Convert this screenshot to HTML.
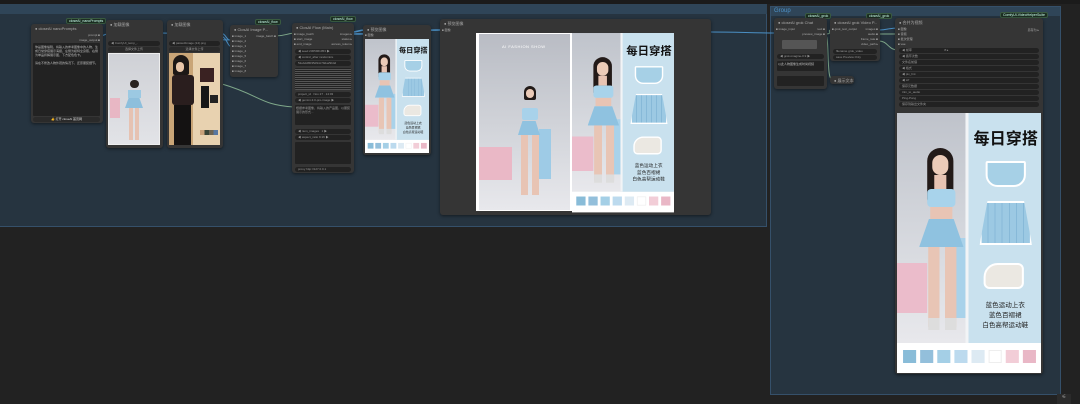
<!DOCTYPE html>
<html><head><meta charset="utf-8"><style>
*{box-sizing:border-box;margin:0;padding:0}
body{width:1080px;height:404px;overflow:hidden;background:#222;font-family:"Liberation Sans","Noto Sans CJK SC",sans-serif;position:relative;color:#ccc}
.a{position:absolute}
.node{position:absolute;background:#353535;border-radius:3px;box-shadow:0 1px 3px rgba(0,0,0,.5)}
.tt{position:absolute;left:4px;top:2px;font-size:4px;color:#aaa;white-space:nowrap}
.w{position:absolute;height:5px;background:#222;border-radius:3px;font-size:3px;color:#999;line-height:5px;padding:0 3px;white-space:nowrap;overflow:hidden}
.badge{position:absolute;height:6px;background:#1c2e22;border:1px solid #395a40;border-radius:2px;font-size:3.5px;color:#cfe;line-height:4px;padding:0 2px;white-space:nowrap}
.ta{position:absolute;background:#222;border-radius:1px}
.poster{position:absolute;left:0;top:0;width:143px;height:260px;background:#fff;transform-origin:0 0;overflow:hidden}
.ph{position:absolute;left:0;top:0;width:143px;height:230px;background:linear-gradient(180deg,#bfc3cb,#dcdee3 70%,#e8e8ec)}
.rp{position:absolute;left:68px;top:0;width:75px;height:230px;background:#c9e1ee;border-left:3px solid #f2f4f6}
.sw{position:absolute;top:237px;width:13px;height:13px}
</style></head><body>
<!-- top bar -->
<div class="a" style="left:0;top:0;width:1080px;height:4px;background:#1b1b1b"></div>
<!-- left group -->
<div class="a" style="left:0;top:4px;width:767px;height:223px;background:#263440;border-bottom:1px solid #35506a;border-right:1px solid #35506a"></div>
<div class="a" style="left:0;top:4px;width:767px;height:10px;background:#2f4558"></div>
<!-- right group -->
<div class="a" style="left:770px;top:6px;width:291px;height:389px;background:#263440;border:1px solid #35506a"></div>
<div class="a" style="left:771px;top:7px;width:289px;height:9px;background:#2f4558;font-size:6px;color:#4e93c9;padding-left:3px;line-height:9px">Group</div>

<svg class="a" style="left:0;top:0" width="1080" height="404">
<g fill="none" stroke-width="1">
<path d="M100 36 C104 36,104 34,108 34" stroke="#4a8fc4"/>
<path d="M160 33 C196 33,200 40,230 40" stroke="#4a8fc4"/>
<path d="M220 33 C226 33,226 40,230 40" stroke="#4a8fc4"/>
<path d="M220 36 C226 36,228 46,230 46" stroke="#4a8fc4"/>
<path d="M162 54 C200 60,200 20,160 54" stroke="none"/>
<path d="M162 52 C190 60,200 80,170 55" stroke="none"/>
<path d="M222 84 C260 95,260 105,294 107" stroke="#7fa88a"/>
<path d="M275 36 C285 36,285 34,294 33" stroke="#7fa88a"/>
<path d="M352 32 C358 32,358 30,366 30" stroke="#4a8fc4" stroke-width="1.5"/>
<path d="M352 34 C400 34,400 30,440 30" stroke="#4a8fc4" stroke-width="1.5"/>
<path d="M710 32 C740 32,750 33,776 33" stroke="#4a8fc4"/>
<path d="M825 34 C835 34,825 30,832 30" stroke="#7fa88a"/>
<path d="M825 34 C830 34,826 80,832 79" stroke="#7fa88a"/>
<path d="M879 30 C888 30,888 28,898 28" stroke="#4a8fc4"/>
<path d="M879 34 C888 34,888 34,898 34" stroke="#7fa88a"/>
<path d="M879 41 C888 41,888 50,898 50" stroke="#7fa88a"/>
</g></svg>

<!-- node1 -->
<div class="badge" style="left:66px;top:18px">closeAI_nanoPrompts</div>
<div class="node" style="left:31px;top:24px;width:72px;height:99px">
<div class="tt">● closeAI nanoPrompts</div>
<div class="a" style="right:3px;top:9px;font-size:3px;color:#aaa;text-align:right;line-height:5px">prompt ■<br>image_output ■</div>
<div class="ta" style="left:2px;top:19px;width:67px;height:73px;padding:2px;font-size:3px;line-height:4px;color:#bbb">你是图像编辑，将输入的参考图像中的人物，生成日常穿搭展示海报，左侧为模特全身照，右侧为单品拆解展示图，下方配色色卡。<br><br>请在不修改人物外观的情况下，还原服装细节。</div>
<div class="w" style="left:2px;top:93px;width:67px;text-align:center;background:#2a2a2a;color:#ddd">👍 打开 closeAI 首页网</div>
</div>
<!-- node2 -->
<div class="node" style="left:106px;top:20px;width:57px;height:128px">
<div class="tt">● 加载图像</div>
<div class="w" style="left:2px;top:21px;width:52px">◀ ComfyUI_temp_..</div>
<div class="w" style="left:2px;top:27px;width:52px;background:#2a2a2a;text-align:center">选择文件上传</div>
<div class="a" style="left:2px;top:33px;width:52px;height:92px;background:linear-gradient(#cfd1d6,#e2e3e7);border:1px solid #eee"></div>
<div class="a" style="left:24px;top:60px;width:9px;height:8px;background:#2a2320;border-radius:4px"></div>
<div class="a" style="left:22px;top:70px;width:13px;height:8px;background:#9cc9e2"></div>
<div class="a" style="left:19px;top:78px;width:18px;height:10px;background:#8ebfdc;clip-path:polygon(20% 0,80% 0,100% 100%,0 100%)"></div>
<div class="a" style="left:4px;top:78px;width:10px;height:20px;background:#e8b7c4"></div>
<div class="a" style="left:23px;top:88px;width:10px;height:32px;background:linear-gradient(90deg,#e6c2b2 40%,transparent 40%,transparent 60%,#e6c2b2 60%)"></div>
</div>
<!-- node3 -->
<div class="node" style="left:167px;top:20px;width:56px;height:128px">
<div class="tt">● 加载图像</div>
<div class="w" style="left:2px;top:21px;width:51px">◀ pasted/image (14).png</div>
<div class="w" style="left:2px;top:27px;width:51px;background:#2a2a2a;text-align:center">选择文件上传</div>
<div class="a" style="left:2px;top:33px;width:51px;height:92px;background:#e8d2b0"></div>
<div class="a" style="left:2px;top:33px;width:24px;height:92px;background:#c9a577"></div>
<div class="a" style="left:6px;top:35px;width:16px;height:20px;background:#1d1816;border-radius:8px 8px 2px 2px"></div>
<div class="a" style="left:9px;top:42px;width:8px;height:10px;background:#e9c7aa;border-radius:4px"></div>
<div class="a" style="left:5px;top:55px;width:22px;height:30px;background:#2a1e1e;border-radius:3px"></div>
<div class="a" style="left:7px;top:85px;width:17px;height:40px;background:#141212"></div>
<div class="a" style="left:33px;top:48px;width:14px;height:14px;background:#3a2222"></div>
<div class="a" style="left:34px;top:66px;width:8px;height:22px;background:#161616"></div>
<div class="a" style="left:43px;top:75px;width:8px;height:8px;background:#222"></div>
<div class="a" style="left:33px;top:110px;width:18px;height:5px;background:linear-gradient(90deg,#c9a27a 25%,#394436 25%,#394436 50%,#6d6452 50%,#6d6452 75%,#5877a0 75%)"></div>
</div>
<!-- node4 -->
<div class="badge" style="left:255px;top:19px">closeAI_flow</div>
<div class="node" style="left:230px;top:25px;width:48px;height:52px">
<div class="tt">● ClosAI Image P...</div>
<div class="a" style="left:2px;top:9px;font-size:3px;line-height:5px;color:#aaa">■ image_1<br>■ image_2<br>■ image_3<br>■ image_4<br>■ image_5<br>■ image_6<br>■ image_7<br>■ image_8</div>
<div class="a" style="right:2px;top:9px;font-size:3px;color:#aaa">image_batch ■</div>
</div>
<!-- node5 -->
<div class="badge" style="left:330px;top:16px">closeAI_flow</div>
<div class="node" style="left:292px;top:23px;width:62px;height:150px">
<div class="tt">● ClosAI Flow (Main)</div>
<div class="a" style="left:2px;top:9px;font-size:3px;line-height:5px;color:#aaa">■ image_batch<br>■ start_image<br>■ end_image</div>
<div class="a" style="right:2px;top:9px;font-size:3px;line-height:5px;color:#aaa;text-align:right">images ▸<br>status ▸<br>access_token ▸</div>
<div class="w" style="left:3px;top:26px;width:56px">◀ seed 2305961053&nbsp;▶</div>
<div class="w" style="left:3px;top:32px;width:56px">◀ control_after randomize</div>
<div class="w" style="left:3px;top:38px;width:56px">52ebdd8035d94c79da29b4d</div>
<div class="ta" style="left:3px;top:45px;width:56px;height:22px;background:repeating-linear-gradient(#222 0 1px,#555 1px 2px)"></div>
<div class="w" style="left:3px;top:69px;width:56px">project_id&nbsp;&nbsp;&nbsp;Nov 27 · 14:03</div>
<div class="w" style="left:3px;top:75px;width:56px">◀ gemini-3.0-pro-image ▶</div>
<div class="ta" style="left:3px;top:82px;width:56px;height:20px;font-size:3px;color:#999;padding:1px">根据参考图像，将输入的产品图，以服装展示的形式...</div>
<div class="w" style="left:3px;top:106px;width:56px">◀ num_images&nbsp;&nbsp;&nbsp;1 ▶</div>
<div class="w" style="left:3px;top:112px;width:56px">◀ aspect_ratio 9:16 ▶</div>
<div class="ta" style="left:3px;top:119px;width:56px;height:22px"></div>
<div class="w" style="left:3px;top:144px;width:56px">proxy http://127.0.0.1</div>
</div>
<!-- node6 preview -->
<div class="node" style="left:363px;top:25px;width:68px;height:130px">
<div class="tt">● 预览图像</div>
<div class="a" style="left:2px;top:8px;font-size:3px;color:#aaa">■ 图像</div>
<div class="a" style="left:2px;top:14px;width:64px;height:114px;overflow:hidden"><div class="poster" id="p1" style="transform:scale(0.4476,0.4385)"></div></div>
</div>
<!-- node7 big preview -->
<div class="node" style="left:440px;top:19px;width:271px;height:196px">
<div class="tt">● 预览图像</div>
<div class="a" style="left:2px;top:9px;font-size:3px;color:#aaa">■ 图像</div>
<div class="a" style="left:36px;top:14px;width:198px;height:178px;background:#fff"></div>
<div class="a" style="left:39px;top:15px;width:91px;height:176px;background:linear-gradient(#b9bcc4,#d9dbe0 70%,#e8e8ec)"></div>
<div class="a" style="left:62px;top:25px;font-size:4px;color:#fff;letter-spacing:.5px">AI FASHION SHOW</div>
<div class="a" style="left:39px;top:128px;width:33px;height:33px;background:#eab8c6"></div>
<div class="a" style="left:99px;top:110px;width:12px;height:50px;background:#9ecbe6"></div>
<div class="a" style="left:84px;top:67px;width:12px;height:14px;background:#221a18;border-radius:6px 6px 2px 2px"></div>
<div class="a" style="left:86px;top:70px;width:8px;height:9px;background:#ebcab7;border-radius:4px"></div>
<div class="a" style="left:82px;top:89px;width:16px;height:12px;background:#a8d2ea;border-radius:2px"></div>
<div class="a" style="left:78px;top:102px;width:22px;height:14px;background:#90c2e0;clip-path:polygon(20% 0,80% 0,100% 100%,0 100%)"></div>
<div class="a" style="left:81px;top:116px;width:18px;height:60px;background:linear-gradient(90deg,#e8c4b4 38%,transparent 38%,transparent 62%,#e8c4b4 62%)"></div>
<div class="a" style="left:132px;top:14px;width:102px;height:180px;overflow:hidden"><div class="poster" id="p2" style="transform:scale(0.713,0.69)"></div></div>
</div>
<!-- right group nodes -->
<div class="badge" style="left:805px;top:13px">closeAI_grok</div>
<div class="node" style="left:774px;top:18px;width:53px;height:71px">
<div class="tt">● closeAI grok Chat</div>
<div class="a" style="left:2px;top:9px;font-size:3px;color:#aaa">■ image_input</div>
<div class="a" style="right:2px;top:9px;font-size:3px;line-height:5px;color:#aaa;text-align:right">text ■<br>preview_image ■</div>
<div class="ta" style="left:8px;top:22px;width:35px;height:9px;background:#555"></div>
<div class="w" style="left:3px;top:36px;width:47px">◀ grok-imagine-0.9 ▶</div>
<div class="ta" style="left:3px;top:43px;width:47px;height:10px;font-size:3px;color:#bbb;padding:1px">以此人物图像生成时尚视频</div>
<div class="ta" style="left:3px;top:58px;width:47px;height:10px"></div>
</div>
<div class="badge" style="left:866px;top:13px">closeAI_grok</div>
<div class="node" style="left:830px;top:18px;width:50px;height:43px">
<div class="tt">● closeAI grok Video P...</div>
<div class="a" style="left:2px;top:9px;font-size:3px;color:#aaa">■ grok_text_output</div>
<div class="a" style="right:2px;top:9px;font-size:3px;line-height:5px;color:#aaa;text-align:right">images ■<br>audio ■<br>frame_rate ■<br>video_path ▸</div>
<div class="w" style="left:3px;top:31px;width:44px">filename grok_video</div>
<div class="w" style="left:3px;top:37px;width:44px">save Preview Only</div>
</div>
<div class="node" style="left:830px;top:76px;width:24px;height:8px"><div class="tt">● 展示文本</div></div>
<div class="badge" style="left:1000px;top:12px">ComfyUI-VideoHelperSuite</div>
<div class="node" style="left:895px;top:18px;width:148px;height:356px">
<div class="tt">● 合并为视频</div>
<div class="a" style="left:3px;top:9px;font-size:3px;line-height:5px;color:#aaa">■ 图像<br>■ 音频<br>■ 批次管理<br>■ vae</div>
<div class="a" style="right:4px;top:10px;font-size:3px;color:#aaa">另存为 ▸</div>
<div class="w" style="left:4px;top:30px;width:140px">◀ 帧率&nbsp;&nbsp;&nbsp;&nbsp;&nbsp;&nbsp;&nbsp;&nbsp;&nbsp;&nbsp;&nbsp;&nbsp;&nbsp;&nbsp;&nbsp;&nbsp;&nbsp;&nbsp;&nbsp;&nbsp;&nbsp;&nbsp;&nbsp;&nbsp;&nbsp;&nbsp;&nbsp;&nbsp;&nbsp;&nbsp;&nbsp;&nbsp;&nbsp;&nbsp;&nbsp;&nbsp;&nbsp;&nbsp;&nbsp;8 ▸</div>
<div class="w" style="left:4px;top:36px;width:140px">◀ 循环次数</div>
<div class="w" style="left:4px;top:42px;width:140px">文件名前缀</div>
<div class="w" style="left:4px;top:48px;width:140px">◀ 格式</div>
<div class="w" style="left:4px;top:54px;width:140px">◀ pix_fmt</div>
<div class="w" style="left:4px;top:60px;width:140px">◀ crf</div>
<div class="w" style="left:4px;top:66px;width:140px">保存元数据</div>
<div class="w" style="left:4px;top:72px;width:140px">trim_to_audio</div>
<div class="w" style="left:4px;top:78px;width:140px">Ping-Pong</div>
<div class="w" style="left:4px;top:84px;width:140px">保存到输出文件夹</div>
<div class="a" style="left:2px;top:95px;width:144px;height:260px;overflow:hidden"><div class="poster" id="p3" style="transform:scale(1.007,1)"></div></div>
</div>
<div class="a" style="left:1057px;top:394px;width:14px;height:10px;background:#2b2b2b;font-size:5px;color:#aaa;text-align:center">⚟</div>

<template id="tp">
<div class="ph"></div>
<div class="a" style="left:0;top:150px;width:30px;height:50px;background:#ebbccb"></div>
<div class="a" style="left:55px;top:125px;width:14px;height:80px;background:#a9d2ea"></div>
<div class="rp"></div>
<div class="a" style="left:30px;top:35px;width:26px;height:55px;background:#231a18;border-radius:13px 13px 4px 4px"></div>
<div class="a" style="left:35px;top:42px;width:16px;height:20px;background:#eccbb8;border-radius:8px"></div>
<div class="a" style="left:37px;top:62px;width:12px;height:14px;background:#e7c3b2"></div>
<div class="a" style="left:30px;top:76px;width:28px;height:18px;background:#a8d3eb;border-radius:4px"></div>
<div class="a" style="left:33px;top:94px;width:22px;height:12px;background:#e8c4b4"></div>
<div class="a" style="left:22px;top:106px;width:44px;height:28px;background:#8fc2e0;clip-path:polygon(22% 0,78% 0,100% 100%,0 100%)"></div>
<div class="a" style="left:31px;top:134px;width:28px;height:80px;background:linear-gradient(90deg,#e8c5b5 40%,transparent 40%,transparent 60%,#e8c5b5 60%)"></div>
<div class="a" style="left:31px;top:205px;width:28px;height:12px;background:linear-gradient(90deg,#ddd 40%,transparent 40%,transparent 60%,#ddd 60%)"></div>
<div class="a" style="left:76px;top:12px;font-size:16px;font-weight:bold;color:#111;white-space:nowrap">每日穿搭</div>
<div class="a" style="left:88px;top:48px;width:40px;height:26px;background:#a6d0e6;border:2px solid #fff;border-radius:2px 2px 12px 12px"></div>
<div class="a" style="left:82px;top:88px;width:52px;height:44px;background:repeating-linear-gradient(90deg,#9cc9e3 0 6px,#87b9d8 6px 7px);border:2px solid #fff;clip-path:polygon(15% 0,85% 0,100% 100%,0 100%)"></div>
<div class="a" style="left:86px;top:150px;width:40px;height:26px;background:#ebe8e2;border:2px solid #fff;border-radius:14px 6px 6px 6px"></div>
<div class="a" style="left:72px;top:188px;width:71px;text-align:center;font-size:6.5px;line-height:10px;color:#222">蓝色运动上衣<br>蓝色百褶裙<br>白色高帮运动鞋</div>
<div class="sw" style="left:6px;background:#89bcd8"></div>
<div class="sw" style="left:23px;background:#93bfdb"></div>
<div class="sw" style="left:40px;background:#a4cfe6"></div>
<div class="sw" style="left:57px;background:#bcdaee"></div>
<div class="sw" style="left:74px;background:#ddeaf3"></div>
<div class="sw" style="left:91px;background:#fff;border:1px solid #eee"></div>
<div class="sw" style="left:108px;background:#f2cdd7"></div>
<div class="sw" style="left:125px;background:#e9b7c6"></div>
</template>
<script>
var t=document.getElementById('tp').innerHTML;
['p1','p2','p3'].forEach(function(i){document.getElementById(i).innerHTML=t;});
</script>
</body></html>
